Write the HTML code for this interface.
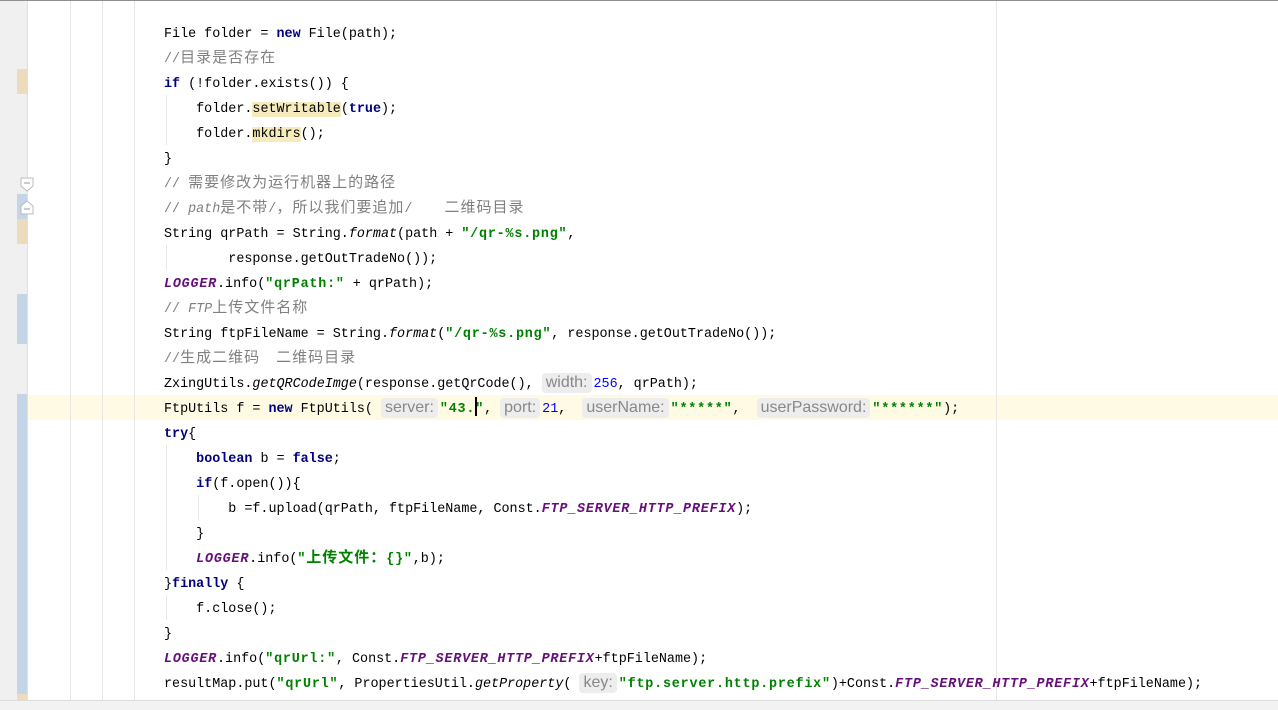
<!DOCTYPE html>
<html><head><meta charset="utf-8"><style>
html,body{margin:0;padding:0;width:1278px;height:710px;overflow:hidden;background:#fff;position:relative}
.top{position:absolute;left:0;top:0;width:1278px;height:1px;background:#8f8f8f}
.gut{position:absolute;left:0;top:1px;width:27px;height:699px;background:#f0f0f0;border-right:1px solid #e0e0e0}
.vl{position:absolute;top:1px;height:699px;width:1px;background:#e6e6e6}
.mk{position:absolute;left:17px;width:10px}
.cur{position:absolute;left:0;top:395px;width:1278px;height:25px;background:#fffae3}
.ln{position:absolute;left:164px;height:25px;line-height:25px;top:0;font-family:"Liberation Mono",monospace;font-size:13.4px;color:#000;white-space:pre;margin-top:1px}
.c{font-family:"Noto Sans CJK SC",sans-serif;font-size:15px;letter-spacing:1px;line-height:0}
.k{color:#000080;font-weight:bold}
.s{color:#008000;font-weight:bold;letter-spacing:0.8px}
.n{color:#0000ff}
.cm{color:#808080}
.i{font-style:italic}
.f{color:#660e7a;font-weight:bold;font-style:italic;letter-spacing:0.8px}
.hl{background:#f6ebbc}
.h{display:inline-block;font-family:"Liberation Sans",sans-serif;font-size:16px;letter-spacing:0;font-weight:normal;color:#888;background:#ededed;border-radius:4px;padding:0 4px;line-height:20px;height:20px;margin:0 2px 0 0;vertical-align:0}
.ig{position:absolute;width:1px;background:#e6e6e6}
.bot{position:absolute;left:0;top:700px;width:1278px;height:10px;background:#f2f2f2;border-top:1px solid #ddd}
.caret{display:inline-block;width:2px;height:19px;background:#000;vertical-align:-4px;margin-right:-2px}
</style></head><body>
<div class="top"></div>
<div class="cur"></div>
<div class="gut"></div>
<div class="mk" style="top:69px;height:25px;background:#ecdcbd"></div>
<div class="mk" style="top:194px;height:25px;background:#c3d5e6"></div>
<div class="mk" style="top:219px;height:25px;background:#ecdcbd"></div>
<div class="mk" style="top:294px;height:50px;background:#c3d5e6"></div>
<div class="mk" style="top:394px;height:300px;background:#c3d5e6"></div>
<div class="mk" style="top:694px;height:6px;background:#ecdcbd"></div>
<svg style="position:absolute;left:20px;top:176px" width="16" height="40"><path d="M1 2h12v8l-6 5l-6-5z" fill="#fff" stroke="#bbb"/><path d="M4 7h6" stroke="#999"/><path d="M1 38h12v-8l-6-5l-6 5z" fill="#fff" stroke="#bbb"/><path d="M4 33h6" stroke="#999"/></svg>
<div class="vl" style="left:70px"></div>
<div class="vl" style="left:102px"></div>
<div class="vl" style="left:134px"></div>
<div class="vl" style="left:996px"></div>
<div class="ig" style="left:166px;top:95px;height:50px"></div>
<div class="ig" style="left:166px;top:245px;height:25px"></div>
<div class="ig" style="left:166px;top:445px;height:125px"></div>
<div class="ig" style="left:198px;top:495px;height:25px"></div>
<div class="ig" style="left:166px;top:595px;height:25px"></div>

<div class="ln" style="top:21px">File folder = <span class="k">new</span> File(path);</div>
<div class="ln cm" style="top:46px">//<span class="c">目录是否存在</span></div>
<div class="ln" style="top:71px"><span class="k">if</span> (!folder.exists()) {</div>
<div class="ln" style="top:96px">    folder.<span class="hl">setWritable</span>(<span class="k">true</span>);</div>
<div class="ln" style="top:121px">    folder.<span class="hl">mkdirs</span>();</div>
<div class="ln" style="top:146px">}</div>
<div class="ln cm" style="top:171px">// <span class="c">需要修改为运行机器上的路径</span></div>
<div class="ln cm" style="top:196px">// <span class="i">path</span><span class="c">是不带</span>/<span class="c">，所以我们要追加</span>/    <span class="c">二维码目录</span></div>
<div class="ln" style="top:221px">String qrPath = String.<span class="i">format</span>(path + <span class="s">"/qr-%s.png"</span>,</div>
<div class="ln" style="top:246px">        response.getOutTradeNo());</div>
<div class="ln" style="top:271px"><span class="f">LOGGER</span>.info(<span class="s">"qrPath:"</span> + qrPath);</div>
<div class="ln cm" style="top:296px">// <span class="i">FTP</span><span class="c">上传文件名称</span></div>
<div class="ln" style="top:321px">String ftpFileName = String.<span class="i">format</span>(<span class="s">"/qr-%s.png"</span>, response.getOutTradeNo());</div>
<div class="ln cm" style="top:346px">//<span class="c">生成二维码</span>  <span class="c">二维码目录</span></div>
<div class="ln" style="top:371px">ZxingUtils.<span class="i">getQRCodeImge</span>(response.getQrCode(), <span class="h">width:</span><span class="n">256</span>, qrPath);</div>
<div class="ln" style="top:396px">FtpUtils f = <span class="k">new</span> FtpUtils( <span class="h">server:</span><span class="s">"43.<span class="caret"></span>"</span>, <span class="h">port:</span><span class="n">21</span>,  <span class="h">userName:</span><span class="s">"*****"</span>,  <span class="h">userPassword:</span><span class="s">"******"</span>);</div>
<div class="ln" style="top:421px"><span class="k">try</span>{</div>
<div class="ln" style="top:446px">    <span class="k">boolean</span> b = <span class="k">false</span>;</div>
<div class="ln" style="top:471px">    <span class="k">if</span>(f.open()){</div>
<div class="ln" style="top:496px">        b =f.upload(qrPath, ftpFileName, Const.<span class="f">FTP_SERVER_HTTP_PREFIX</span>);</div>
<div class="ln" style="top:521px">    }</div>
<div class="ln" style="top:546px">    <span class="f">LOGGER</span>.info(<span class="s">"<span class="c">上传文件：</span>{}"</span>,b);</div>
<div class="ln" style="top:571px">}<span class="k">finally</span> {</div>
<div class="ln" style="top:596px">    f.close();</div>
<div class="ln" style="top:621px">}</div>
<div class="ln" style="top:646px"><span class="f">LOGGER</span>.info(<span class="s">"qrUrl:"</span>, Const.<span class="f">FTP_SERVER_HTTP_PREFIX</span>+ftpFileName);</div>
<div class="ln" style="top:671px">resultMap.put(<span class="s">"qrUrl"</span>, PropertiesUtil.<span class="i">getProperty</span>( <span class="h">key:</span><span class="s">"ftp.server.http.prefix"</span>)+Const.<span class="f">FTP_SERVER_HTTP_PREFIX</span>+ftpFileName);</div>
<div class="bot"></div>
</body></html>
